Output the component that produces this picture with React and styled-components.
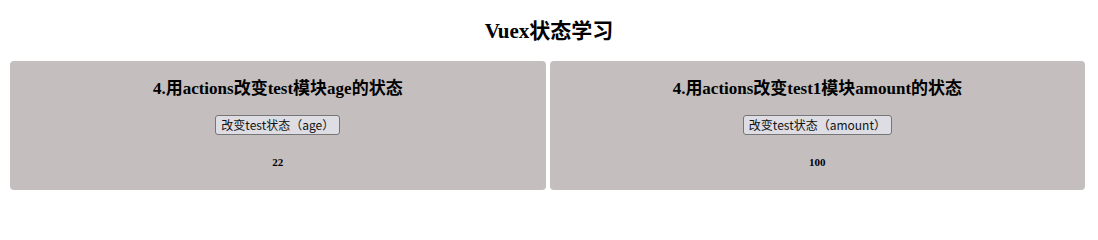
import React, { useState } from "react";
import styled, { createGlobalStyle } from "styled-components";

const GlobalStyle = createGlobalStyle`
  body {
    margin: 0;
    background: #fff;
    font-family: "Liberation Serif", "Noto Sans CJK SC", serif;
  }
`;

const Page = styled.div`
  padding: 17px 8px 0;
`;

const Title = styled.h2`
  margin: 0 0 14px;
  text-align: center;
  font-size: 21px;
  line-height: 28px;
  font-weight: bold;
  color: #000;
`;

const Row = styled.div`
  display: flex;
`;

const Card = styled.div`
  flex: 0 0 49.5%;
  margin: 2px;
  box-sizing: border-box;
  padding: 15px 0 20px;
  background: #c4bebe;
  border-radius: 4px;
  text-align: center;
`;

const Heading = styled.h3`
  margin: 0 0 14px;
  font-size: 17px;
  line-height: 25px;
  font-weight: bold;
  color: #000;
`;

const ActionButton = styled.button`
  height: 20px;
  padding: 0 5px;
  font-family: "Noto Sans CJK SC", "Noto Sans", sans-serif;
  font-size: 12px;
  line-height: 18px;
  color: #111;
  background: #dddde3;
  border: 1px solid #767676;
  border-radius: 3px;
  cursor: pointer;
`;

const Value = styled.div`
  margin-top: 19px;
  font-size: 11px;
  line-height: 16px;
  font-weight: bold;
  color: #000;
`;

const StateCard = ({ title, label, initial, step }) => {
    const [value, setValue] = useState(initial);
    return (
        <Card>
            <Heading>{title}</Heading>
            <ActionButton onClick={() => setValue(value + step)}>{label}</ActionButton>
            <Value>{value}</Value>
        </Card>
    );
};

const App = () => (
    <Page>
        <GlobalStyle />
        <Title>Vuex状态学习</Title>
        <Row>
            <StateCard
                title="4.用actions改变test模块age的状态"
                label="改变test状态（age）"
                initial={22}
                step={1}
            />
            <StateCard
                title="4.用actions改变test1模块amount的状态"
                label="改变test状态（amount）"
                initial={100}
                step={1}
            />
        </Row>
    </Page>
);

export default App;
